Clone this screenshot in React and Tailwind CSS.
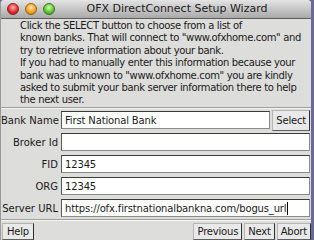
import React from "react";

const font = { fontFamily: '"DejaVu Sans", "Liberation Sans", sans-serif' };

function Field({ label, value, children, caret }) {
  return (
    <div className="flex items-center h-[22px]">
      <div className="w-[60px] text-right pr-[3px] shrink-0 whitespace-nowrap">{label}</div>
      <div className="flex-1 h-[18px] bg-white border border-[#8a8a8a] border-t-[#3a3a3a] border-l-[#5a5a5a] flex items-center pl-[3px] overflow-hidden whitespace-nowrap tracking-[-0.15px]">
        {value}
        {caret && <span className="inline-block w-[1px] h-[13px] bg-black ml-[1px]" />}
      </div>
      {children}
    </div>
  );
}

function Btn({ children, className = "" }) {
  return (
    <div
      className={`flex items-center px-[3px] bg-[#e9e9e9] border border-[#b5b5b5] border-r-[#303030] border-b-[#606060] whitespace-nowrap tracking-[-0.2px] ${className}`}
    >
      {children}
    </div>
  );
}

export default function App() {
  return (
    <div
      className="w-[314px] h-[240px] bg-[#6a6a98] flex overflow-hidden text-[10px] text-[#1a1a1a]"
      style={font}
    >
      <div className="w-[311px] h-full bg-[#dddddb] flex flex-col rounded-tl-[4px] rounded-tr-[4px] border-l border-[#9a9a9a] overflow-hidden">
        <div className="h-[19px] shrink-0 bg-gradient-to-b from-[#e4e4e4] to-[#a9a9a9] border-b border-[#5e5e5e] flex items-center relative">
          <div className="flex gap-[6px] pl-[6px]">
            <div className="w-[12px] h-[12px] rounded-full border border-[#8e2020] bg-[radial-gradient(circle_at_50%_35%,#ffb0b0,#e02828_60%,#a01010)]" />
            <div className="w-[12px] h-[12px] rounded-full border border-[#9a6010] bg-[radial-gradient(circle_at_50%_35%,#ffe0a0,#f0a020_60%,#b06a00)]" />
            <div className="w-[12px] h-[12px] rounded-full border border-[#3a7a1a] bg-[radial-gradient(circle_at_50%_35%,#d0ffb0,#5ac030_60%,#2a801a)]" />
          </div>
          <div className="flex-1 text-center pr-[12px] text-[11px] text-[#202020]">
            OFX DirectConnect Setup Wizard
          </div>
        </div>
        <div className="px-[19px] pt-[1px] leading-[12.4px] h-[88px] shrink-0 whitespace-nowrap tracking-[-0.35px]">
          <div>Click the SELECT button to choose from a list of</div>
          <div>known banks. That will connect to "www.ofxhome.com" and</div>
          <div>try to retrieve information about your bank.</div>
          <div>If you had to manually enter this information because your</div>
          <div>bank was unknown to "www.ofxhome.com" you are kindly</div>
          <div>asked to submit your bank server information there to help</div>
          <div>the next user.</div>
        </div>
        <div className="border-t border-[#a0a0a0] border-b border-b-[#f4f4f4] shrink-0" />
        <div className="flex flex-col pr-[1px]">
          <Field label="Bank Name" value="First National Bank">
            <Btn className="ml-[2px] h-[21px]">Select</Btn>
          </Field>
          <Field label="Broker Id" value="" />
          <Field label="FID" value="12345" />
          <Field label="ORG" value="12345" />
          <Field label="Server URL" value="https://ofx.firstnationalbankna.com/bogus_url" caret />
        </div>
        <div className="flex-1" />
        <div className="border-t border-[#a0a0a0] border-b border-b-[#f4f4f4]" />
        <div className="flex items-end pt-[2px]">
          <Btn className="ml-[1px] h-[17px] px-[4px]">Help</Btn>
          <div className="flex-1" />
          <Btn className="h-[17px]">Previous</Btn>
          <Btn className="ml-[2px] h-[17px]">Next</Btn>
          <Btn className="ml-[2px] h-[17px]">Abort</Btn>
        </div>
      </div>
    </div>
  );
}
